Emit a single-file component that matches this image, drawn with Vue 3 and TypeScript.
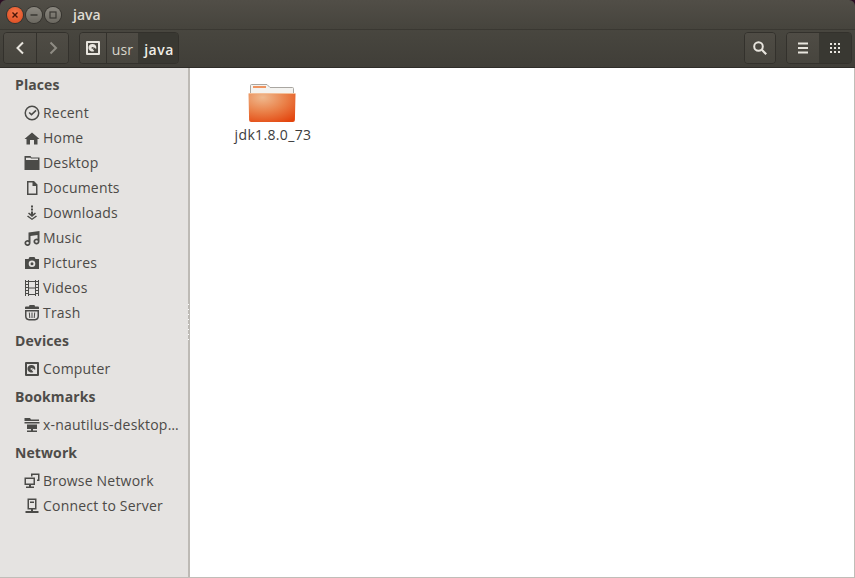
<template>
  <div class="window">
    <header class="titlebar">
      <div class="win-buttons">
        <span class="win-btn close">
          <svg viewBox="0 0 8 8" width="8" height="8"><path d="M1.500 1.500l5 5M6.500 1.500l-5 5" stroke="#4a1608" stroke-width="1.400" /></svg>
        </span>
        <span class="win-btn">
          <svg viewBox="0 0 8 8" width="8" height="8"><path d="M0.500 4h7" stroke="#3a3833" stroke-width="1.400" /></svg>
        </span>
        <span class="win-btn">
          <svg viewBox="0 0 8 8" width="8" height="8"><rect x="1" y="1" width="6" height="6" fill="none" stroke="#3a3833" stroke-width="1.200" /></svg>
        </span>
      </div>
      <span class="title">java</span>
    </header>

    <div class="toolbar">
      <div class="btn-group">
        <button class="tool-btn nav" type="button">
          <svg viewBox="0 0 12 14" width="12" height="14"><path d="M9 1.500L3.500 7 9 12.500" fill="none" stroke="#e8e5de" stroke-width="2" /></svg>
        </button>
        <button class="tool-btn nav" type="button">
          <svg viewBox="0 0 12 14" width="12" height="14"><path d="M3.500 1.500L9 7l-5.500 5.500" fill="none" stroke="#8f8c84" stroke-width="2" /></svg>
        </button>
      </div>

      <div class="btn-group path">
        <button class="tool-btn crumb-disk" type="button">
          <svg viewBox="0 0 16 16" width="16" height="16">
            <path :d="icons.disk" fill="#e8e5de" fill-rule="evenodd" />
          </svg>
        </button>
        <button class="tool-btn crumb" type="button">usr</button>
        <button class="tool-btn crumb active" type="button">java</button>
      </div>

      <div class="spacer"></div>

      <div class="btn-group">
        <button class="tool-btn search" type="button">
          <svg viewBox="0 0 16 16" width="16" height="16">
            <circle cx="6.500" cy="6.500" r="4.300" fill="none" stroke="#e8e5de" stroke-width="2" />
            <path d="M9.800 9.800l4.400 4.400" stroke="#e8e5de" stroke-width="2.200" />
          </svg>
        </button>
      </div>

      <div class="btn-group">
        <button class="tool-btn square" type="button">
          <svg viewBox="0 0 12 12" width="12" height="12"><path d="M1 1.500h10M1 6h10M1 10.500h10" stroke="#e8e5de" stroke-width="2" /></svg>
        </button>
        <button class="tool-btn square active" type="button">
          <svg viewBox="0 0 11 11" width="11" height="11" fill="#e8e5de">
            <rect v-for="c in gridDots" :key="c.k" :x="c.x" :y="c.y" width="2" height="2" />
          </svg>
        </button>
      </div>
    </div>

    <div class="body">
      <aside class="sidebar">
        <section v-for="group in groups" :key="group.name" class="group">
          <h3>{{ group.name }}</h3>
          <ul>
            <li v-for="item in group.items" :key="item.label">
              <svg viewBox="0 0 16 16" width="16" height="16" class="side-icon">
                <path :d="icons[item.icon]" fill="#4b4b48" fill-rule="evenodd" />
              </svg>
              <span>{{ item.label }}</span>
            </li>
          </ul>
        </section>
        <span class="grip"></span>
      </aside>

      <main class="files">
        <div class="file">
          <svg class="folder" viewBox="0 0 48 40" width="48" height="40">
            <defs>
              <radialGradient id="fbody" cx="0.3" cy="0.15" r="1">
                <stop offset="0" stop-color="#efb98e" />
                <stop offset="0.5" stop-color="#ea8149" />
                <stop offset="1" stop-color="#e3440d" />
              </radialGradient>
            </defs>
            <path d="M2.500 14V3.500q0-1 1-1h15.500l3 3h22.500q1 0 1 1V14z" fill="#f4f3f0" stroke="#a9a6a1" />
            <rect x="5" y="4" width="13" height="2" fill="#ef9460" />
            <path d="M1.500 11h45q1 0 1 1l-.6 26q0 2-2 2H3.100q-2 0-2-2L.5 12q0-1 1-1z" fill="url(#fbody)" />
            <path d="M1 11.500h46" stroke="#f3bf98" stroke-width="1" />
          </svg>
          <span class="file-name">jdk1.8.0_73</span>
        </div>
      </main>
    </div>
  </div>
</template>

<script setup lang="ts">
type IconName =
  | 'clock' | 'home' | 'folder' | 'doc' | 'download' | 'music' | 'camera'
  | 'film' | 'trash' | 'disk' | 'share' | 'network' | 'server'

interface SideItem {
  label: string
  icon: IconName
}

const icons: Record<IconName, string> = {
  clock: 'M8 0.500a7.500 7.500 0 1 1 0 15 7.500 7.500 0 0 1 0-15zM8 2a6 6 0 1 0 0 12A6 6 0 0 0 8 2zM11.500 4.800l1.100 1.100L7.500 10.800 4.600 8l1.100-1.100 1.800 1.700z',
  home: 'M8 2.500l7.500 6.500h-2v5.500H10V10H6v4.500H2.500V9H.500z',
  folder: 'M0.500 1h6l1 1.500h8V15H.500zM2 3.500V5h12V3.500H7l-.5-.8H2z',
  doc: 'M3 1h7l3.500 3.500V15H3zM4.500 2.500v11h7.500V6H8.500V2.500z',
  download: 'M7 0.500h2v2H7zM7 3.500h2v2H7zM7 6.500h2V9l2-1.500L12 8.500 8 12 4 8.500 5 7.500 7 9zM3 11.500l1-1 4 3 4-3 1 1L8 15z',
  music: 'M4.500 2.500l11-1.500v10.500a3 3 0 1 1-2-2.800V5l-7 1v7a3 3 0 1 1-2-2.800zM3.500 11.700a1.300 1.300 0 1 0 0 2.600 1.300 1.300 0 0 0 0-2.600zM12.500 10.200a1.300 1.300 0 1 0 0 2.600 1.300 1.300 0 0 0 0-2.600z',
  camera: 'M1 4h3.500l1-2h5l1 2H15v10H1zM8 5.500a3.300 3.300 0 1 0 0 6.600 3.300 3.300 0 0 0 0-6.600zM8 7.300a1.500 1.500 0 1 1 0 3 1.500 1.500 0 0 1 0-3z',
  film: 'M1 0h1v16H1zM4 0h1v16H4zM11 0h1v16h-1zM14 0h1v16h-1zM2 1h2v1H2zM2 4h2v1H2zM2 7h2v1H2zM2 10h2v1H2zM2 13h2v1H2zM12 1h2v1h-2zM12 4h2v1h-2zM12 7h2v1h-2zM12 10h2v1h-2zM12 13h2v1h-2zM5 1h6v1H5zM5 7.500h6v1H5zM5 14h6v1H5z',
  trash: 'M5.500 0h5l.5 1.500h3q1 0 1 1V4H1V2.500q0-1 1-1h3zM1 5h14v6q0 4-4 4.500H5Q1 15 1 11zM2.500 6.500V11q0 2.700 2.700 3h5.600q2.700-.3 2.700-3V6.500zM4.800 7.500h1l.5 5.500h-1zM7.500 7.500h1V13h-1zM10.200 7.500h1L10.700 13h-1z',
  disk: 'M2 1h12q1 0 1 1v12q0 1-1 1H2q-1 0-1-1V2q0-1 1-1zm1 2v10h10V3zm4.500 1a3.800 3.800 0 0 1 3.800 3.800l-.2 1.200-2.300-1.700-1.300 1.500 1.800 2.200A3.800 3.800 0 1 1 7.500 4zM7.500 7a1 1 0 1 0 0 2 1 1 0 0 0 0-2z',
  share: 'M0.500 1h5.500l1 1.500h8V4H.500zM.500 5h15v1.500H.500zM3 7.500h10V12H9v1.500h4V15H3v-1.500h4V12H3z',
  network: 'M7 0.500h8.500v7.500H13V6.500h1V2H8.500v1.500H7zM.500 4.500H11v7.500H7v1.500h3V15H2v-1.500h3V12H.500zM2 6v4.500h7.500V6z',
  server: 'M3.500 0.500h9v11H9V13h5.500v2h-13v-2H7v-1.500H3.500zM5 2v8h6V2zM6 3.500h4V5H6z'
}

const groups: { name: string; items: SideItem[] }[] = [
  {
    name: 'Places',
    items: [
      { label: 'Recent', icon: 'clock' },
      { label: 'Home', icon: 'home' },
      { label: 'Desktop', icon: 'folder' },
      { label: 'Documents', icon: 'doc' },
      { label: 'Downloads', icon: 'download' },
      { label: 'Music', icon: 'music' },
      { label: 'Pictures', icon: 'camera' },
      { label: 'Videos', icon: 'film' },
      { label: 'Trash', icon: 'trash' }
    ]
  },
  { name: 'Devices', items: [{ label: 'Computer', icon: 'disk' }] },
  { name: 'Bookmarks', items: [{ label: 'x-nautilus-desktop…', icon: 'share' }] },
  {
    name: 'Network',
    items: [
      { label: 'Browse Network', icon: 'network' },
      { label: 'Connect to Server', icon: 'server' }
    ]
  }
]

const gridDots = [0, 4, 8].flatMap((y) =>
  [0, 4, 8].map((x) => ({ k: `${x}-${y}`, x, y }))
)
</script>

<style>
html,
body {
  background: #2c0f24;
}
</style>

<style scoped>
.window {
  width: 855px;
  height: 578px;
  display: flex;
  flex-direction: column;
  overflow: hidden;
  border-radius: 6px 6px 0 0;
  font-family: "Open Sans", "Noto Sans", sans-serif;
}

.titlebar {
  height: 29px;
  flex: none;
  display: flex;
  align-items: center;
  padding-left: 7px;
  background: linear-gradient(#514e47, #46443d);
  box-sizing: border-box;
}

.win-buttons {
  display: flex;
  gap: 3px;
}

.win-btn {
  width: 16px;
  height: 16px;
  border-radius: 50%;
  display: flex;
  align-items: center;
  justify-content: center;
  background: linear-gradient(#8b8880, #6b6860);
  box-shadow: 0 0 0 1px #35332e;
}

.win-btn.close {
  background: radial-gradient(circle at 50% 35%, #f6774a, #d9481d);
}

.title {
  margin-left: 12px;
  font-size: 14px;
  font-weight: 600;
  color: #dfdbd2;
}

.toolbar {
  height: 39px;
  flex: none;
  display: flex;
  align-items: flex-start;
  padding: 2px 3px 0;
  box-sizing: border-box;
  background: linear-gradient(#48463f, #403e38);
  border-top: 1px solid #3a3832;
  border-bottom: 1px solid #2f2d29;
  gap: 10px;
}

.btn-group {
  display: flex;
  height: 32px;
  border: 1px solid #33312c;
  border-radius: 4px;
  overflow: hidden;
  box-sizing: border-box;
}

.tool-btn {
  height: 100%;
  padding: 0;
  display: flex;
  align-items: center;
  justify-content: center;
  border: none;
  border-left: 1px solid #33312c;
  background: linear-gradient(#4f4c45, #47453e);
  color: #d8d5cc;
  font-family: inherit;
  font-size: 14px;
}

.tool-btn:first-child {
  border-left: none;
}

.tool-btn.active {
  background: #393832;
  color: #f0ede6;
  font-weight: 600;
  border-left: none;
}

.nav {
  width: 32px;
}

.crumb-disk {
  width: 26px;
}

.crumb {
  width: 32px;
  padding-top: 2px;
  letter-spacing: 0.1px;
}

.crumb.active {
  width: 40px;
  padding-left: 2px;
  letter-spacing: 0.5px;
}

.square {
  width: 32px;
}

.search {
  width: 30px;
}

.spacer {
  flex: 1;
}

.body {
  flex: 1;
  min-height: 0;
  display: flex;
  border-bottom: 1px solid #c0bdb8;
}

.sidebar {
  position: relative;
  width: 190px;
  flex: none;
  padding-top: 3px;
  background: #e5e3e1;
  box-sizing: border-box;
  border-right: 2px solid #bdbab5;
}

.grip {
  position: absolute;
  right: -1px;
  top: 236px;
  width: 1px;
  height: 36px;
  background: repeating-linear-gradient(#fff 0 1px, transparent 1px 5px);
}

.group {
  margin-bottom: 2px;
}

.group h3 {
  margin: 0 0 1px;
  height: 28px;
  line-height: 28px;
  padding-left: 15px;
  font-size: 14px;
  font-weight: 700;
  color: #4e4c49;
  letter-spacing: 0.1px;
}

.group ul {
  list-style: none;
  margin: 0;
  padding: 0;
}

.group li {
  height: 25px;
  display: flex;
  align-items: center;
  padding-left: 24px;
  font-size: 14px;
  color: #4c4a47;
  letter-spacing: 0.2px;
  white-space: nowrap;
}

.side-icon {
  margin-right: 3px;
  flex: none;
}

.files {
  flex: 1;
  background: #fff;
  padding: 14px 0 0 33px;
  border-right: 1px solid #c0bdb8;
}

.file {
  width: 100px;
  display: flex;
  flex-direction: column;
  align-items: center;
}

.folder {
  margin-right: 2px;
}

.file-name {
  margin-top: 3px;
  font-size: 14px;
  color: #3c3c3c;
  letter-spacing: 0.35px;
}
</style>
